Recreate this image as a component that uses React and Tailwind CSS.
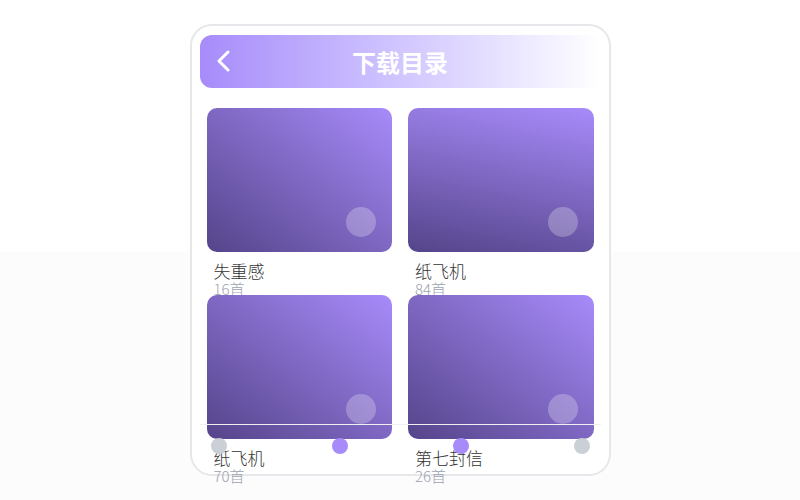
import React from "react";

const items = [
  { title: "失重感", count: "16首", bg: "bg-[linear-gradient(to_bottom_left,#a78bfa,#55448a)]" },
  { title: "纸飞机", count: "84首", bg: "bg-[linear-gradient(192deg,#a78bfa,#55448a)]" },
  { title: "纸飞机", count: "70首", bg: "bg-[linear-gradient(to_bottom_left,#a78bfa,#55448a)]" },
  { title: "第七封信", count: "26首", bg: "bg-[linear-gradient(to_bottom_left,#a78bfa,#55448a)]" },
];

export default function App() {
  return (
    <div
      className="w-full h-[500px] pt-[24px] bg-[linear-gradient(to_bottom,#ffffff_252px,#fcfcfd_252px)]"
      style={{ fontFamily: "'Noto Sans CJK SC', 'Noto Sans', sans-serif" }}
    >
      <div className="relative mx-auto w-[421px] h-[452px] rounded-[22px] border-2 border-[#e6e7ea] bg-white p-2 pt-[9px]">
        <div className="relative h-[53px] rounded-[12px] bg-gradient-to-r from-[#a78bfa] to-white flex items-center justify-center">
          <svg
            className="absolute left-[16px] top-[15px]"
            width="16"
            height="22"
            viewBox="0 0 16 22"
            fill="none"
          >
            <polyline
              points="12,2 3,11 12,20"
              stroke="white"
              strokeWidth="3"
              strokeLinecap="round"
              strokeLinejoin="round"
            />
          </svg>
          <span className="text-white text-[24px] font-bold leading-none">下载目录</span>
        </div>
        <div className="grid grid-cols-2 gap-x-4 gap-y-4 px-[7px] mt-[20px]">
          {items.map((it, i) => (
            <div key={i} className="h-[171px] flex flex-col">
              <div className={`relative shrink-0 h-[144px] rounded-[10px] ${it.bg}`}>
                <div className="absolute right-[16px] bottom-[15px] w-[30px] h-[30px] rounded-full bg-white/25" />
              </div>
              <div className="shrink-0 pl-[7px] mt-[8px]">
                <div className="text-[17px] leading-[21px] font-light text-[#333333]">{it.title}</div>
                <div className="text-[15px] leading-[16px] font-light text-[#9ca3af]">{it.count}</div>
              </div>
            </div>
          ))}
        </div>
        <div className="absolute left-2 right-2 top-[398px] h-px bg-[#f0f0f2]" />
        <div className="absolute left-[19px] right-[19px] top-[412px] flex justify-between">
          <div className="w-4 h-4 rounded-full bg-[#cbd0d6]" />
          <div className="w-4 h-4 rounded-full bg-[#a78bfa]" />
          <div className="w-4 h-4 rounded-full bg-[#a78bfa]" />
          <div className="w-4 h-4 rounded-full bg-[#cbd0d6]" />
        </div>
      </div>
    </div>
  );
}
